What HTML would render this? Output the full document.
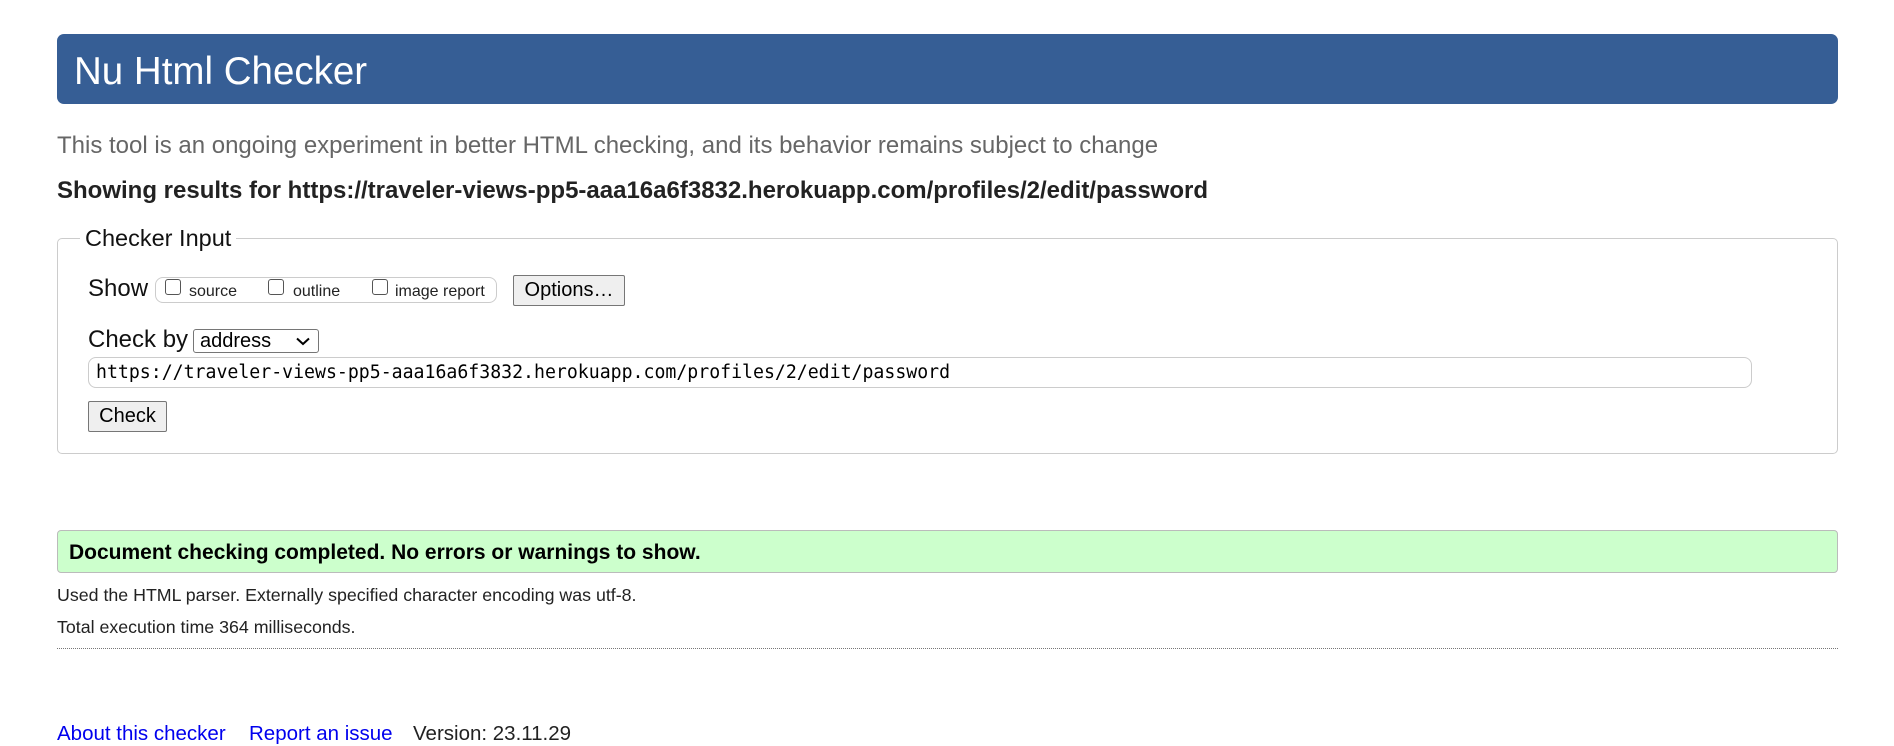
<!DOCTYPE html>
<html><head><meta charset="utf-8"><style>
*{box-sizing:border-box;margin:0;padding:0}
body{width:1894px;height:730px;overflow:hidden;background:#fff;font-family:"Liberation Sans",Arial,sans-serif;color:#111;position:relative}
.a{position:absolute;white-space:nowrap}
.hdr{left:57px;top:34px;width:1781px;height:70px;background:#365e95;border-radius:7px}
.hdr span{position:absolute;left:17px;top:16px;font-size:38.5px;color:#fff}
.fs{left:57px;top:238px;width:1781px;height:216px;border:1px solid #ccc;border-radius:5px}
.btn{background:#efefef;border:1px solid #767676;border-radius:2px;font-size:20px;text-align:center;color:#000}
.cb{width:16px;height:16px;border:1px solid #555;border-radius:3px;background:#fff}
.sm{font-size:16px;color:#222}
</style></head><body>
<div class="a hdr"><span>Nu Html Checker</span></div>
<div class="a" style="left:57px;top:132px;font-size:24px;color:#666">This tool is an ongoing experiment in better HTML checking, and its behavior remains subject to change</div>
<div class="a" style="left:57px;top:177px;font-size:24px;font-weight:bold;color:#222">Showing results for https://traveler-views-pp5-aaa16a6f3832.herokuapp.com/profiles/2/edit/password</div>
<div class="a fs"></div>
<div class="a" style="left:80px;top:225px;padding:0 5px;background:#fff;font-size:23.5px;color:#111">Checker Input</div>
<div class="a" style="left:88px;top:275px;font-size:24px">Show</div>
<div class="a" style="left:155px;top:277px;width:342px;height:26px;border:1px solid #ccc;border-radius:8px"></div>
<div class="a cb" style="left:165px;top:279px"></div><div class="a sm" style="left:189px;top:283px">source</div>
<div class="a cb" style="left:268px;top:279px"></div><div class="a sm" style="left:293px;top:283px">outline</div>
<div class="a cb" style="left:372px;top:279px"></div><div class="a sm" style="left:395px;top:283px">image report</div>
<div class="a btn" style="left:513px;top:275px;width:112px;height:31px;line-height:29px">Options…</div>
<div class="a" style="left:88px;top:326px;font-size:24px">Check by</div>
<div class="a" style="left:193px;top:329px;width:126px;height:24px;border:1px solid #767676;border-radius:3px;font-size:20px;line-height:22px;padding-left:6px;color:#000">address
<svg style="position:absolute;right:8px;top:7px" width="14" height="9" viewBox="0 0 14 9"><path d="M1 1.5l6 5.5 6-5.5" fill="none" stroke="#000" stroke-width="2"/></svg></div>
<div class="a" style="left:88px;top:357px;width:1664px;height:31px;border:1px solid #ccc;border-radius:8px;font-family:'DejaVu Sans Mono','Liberation Mono',monospace;font-size:18.2px;line-height:29px;padding-left:7px;color:#000">https://traveler-views-pp5-aaa16a6f3832.herokuapp.com/profiles/2/edit/password</div>
<div class="a btn" style="left:88px;top:401px;width:79px;height:31px;line-height:29px">Check</div>
<div class="a" style="left:57px;top:530px;width:1781px;height:43px;background:#ccffcc;border:1px solid #bbb;border-radius:4px"></div>
<div class="a" style="left:69px;top:541px;font-size:21px;font-weight:bold;color:#000">Document checking completed. No errors or warnings to show.</div>
<div class="a" style="left:57px;top:585px;font-size:17.8px;color:#222">Used the HTML parser. Externally specified character encoding was utf-8.</div>
<div class="a" style="left:57px;top:617px;font-size:17.8px;color:#222">Total execution time 364 milliseconds.</div>
<div class="a" style="left:57px;top:648px;width:1781px;border-top:1px dotted #777"></div>
<div class="a" style="left:57px;top:722px;font-size:20.5px;color:#00e">About this checker</div>
<div class="a" style="left:249px;top:722px;font-size:20.5px;color:#00e">Report an issue</div>
<div class="a" style="left:413px;top:722px;font-size:20.5px;color:#222">Version: 23.11.29</div>
</body></html>
